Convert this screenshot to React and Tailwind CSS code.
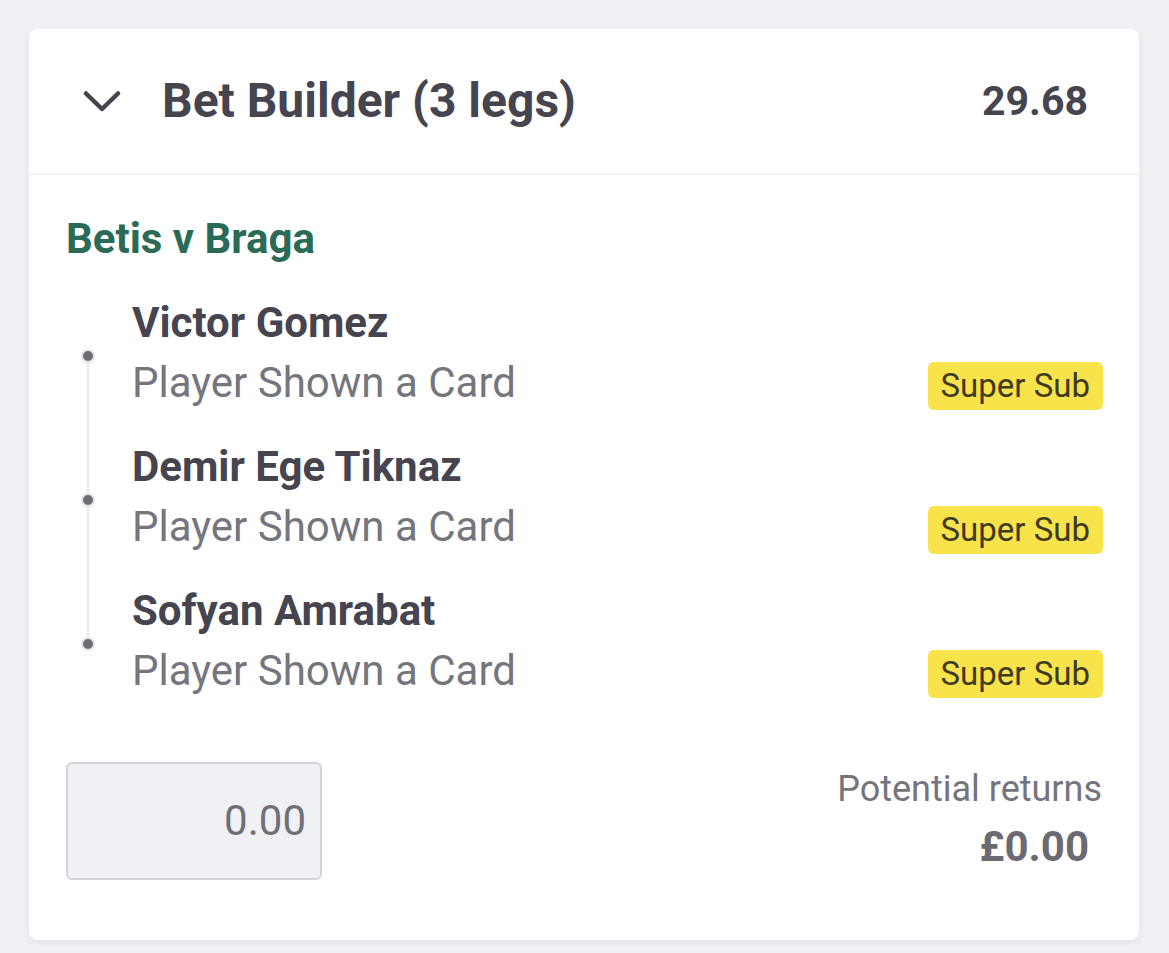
import React from "react";

const legs = [
  { name: "Victor Gomez", market: "Player Shown a Card" },
  { name: "Demir Ege Tiknaz", market: "Player Shown a Card" },
  { name: "Sofyan Amrabat", market: "Player Shown a Card" },
];

function Chevron() {
  return (
    <svg width="38" height="23" viewBox="0 0 38 23" fill="none">
      <path d="M3 3.5 L19 19 L35 3.5" stroke="#45444f" strokeWidth="4.5" strokeLinecap="round" strokeLinejoin="round" />
    </svg>
  );
}

export default function App() {
  return (
    <div
      className="min-h-screen bg-[#f0f0f5] pt-[29px] pl-[29px]"
      style={{ fontFamily: "Roboto, 'Liberation Sans', sans-serif" }}
    >
      <div className="w-[1110px] h-[911px] bg-white rounded-[8px] shadow-[0_3px_6px_rgba(0,0,0,0.06)] flex flex-col">
        {/* Header */}
        <div className="h-[146px] flex items-center pl-[54px] pr-[51px] border-b-2 border-[#f0f0f5]">
          <Chevron />
          <div className="ml-[41px] text-[48px] leading-none font-bold text-[#45444f]">
            Bet Builder (3 legs)
          </div>
          <div className="ml-auto text-[41px] leading-none font-bold text-[#45444f]">29.68</div>
        </div>

        {/* Body */}
        <div className="px-[37px] pt-[43px]">
          <div className="text-[42px] leading-[42px] font-bold text-[#2a6b57]">Betis v Braga</div>

          <div className="relative mt-[33px] flex flex-col gap-[24px]">
            <div className="absolute left-[21px] top-[62px] h-[288px] w-[2px] bg-[#e8e8ee]" />
            {legs.map((l) => (
              <div key={l.name} className="relative flex flex-col pl-[66px]">
                <div className="absolute left-[17px] top-[58px] w-[10px] h-[10px] rounded-full bg-[#6b6b74] ring-2 ring-[#e4e4ea]" />
                <div className="text-[42px] leading-[60px] font-bold text-[#45444f]">{l.name}</div>
                <div className="flex items-center justify-between">
                  <div className="text-[42px] leading-[60px] text-[#75757d]">{l.market}</div>
                  <div className="mt-[5px] mr-[-1px] h-[48px] px-[13px] flex items-center rounded-[6px] bg-[#f8e34b] text-[33px] text-[#3f3b22]">
                    Super Sub
                  </div>
                </div>
              </div>
            ))}
          </div>

          <div className="mt-[61px] flex items-start justify-between">
            <div className="w-[256px] h-[118px] rounded-[6px] border-2 border-[#d3d3d9] bg-[#f0f1f5] flex items-center justify-end pr-[14px]">
              <span className="text-[42px] leading-none text-[#6f6f78]">0.00</span>
            </div>
            <div className="flex flex-col items-end pt-[9px]">
              <div className="text-[36px] leading-[36px] text-[#75747e]">Potential returns</div>
              <div className="mt-[19px] mr-[13px] text-[42px] leading-[42px] font-bold text-[#6b6a73]">£0.00</div>
            </div>
          </div>
        </div>
      </div>
    </div>
  );
}
